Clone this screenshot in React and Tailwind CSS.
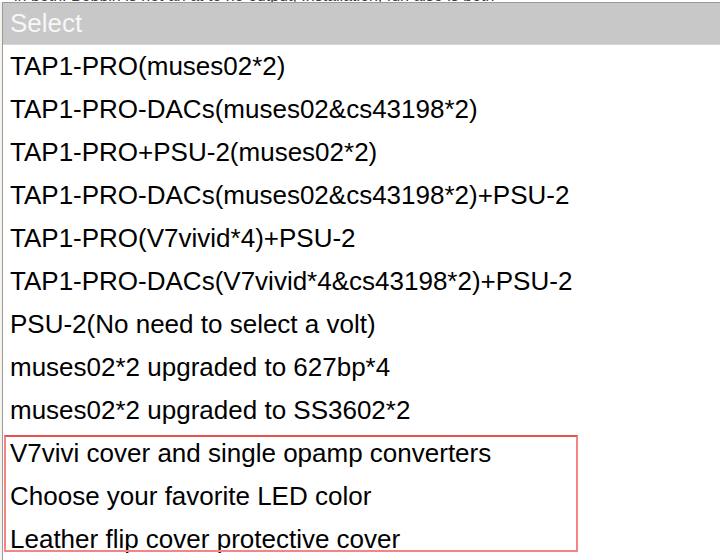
const OPTIONS = [
  'TAP1-PRO(muses02*2)',
  'TAP1-PRO-DACs(muses02&cs43198*2)',
  'TAP1-PRO+PSU-2(muses02*2)',
  'TAP1-PRO-DACs(muses02&cs43198*2)+PSU-2',
  'TAP1-PRO(V7vivid*4)+PSU-2',
  'TAP1-PRO-DACs(V7vivid*4&cs43198*2)+PSU-2',
  'PSU-2(No need to select a volt)',
  'muses02*2 upgraded to 627bp*4',
  'muses02*2 upgraded to SS3602*2',
  'V7vivi cover and single opamp converters',
  'Choose your favorite LED color',
  'Leather flip cover protective cover',
];

export default function App() {
  return (
    <div className="relative w-[720px] h-[560px] overflow-hidden bg-white font-['Liberation_Sans',Arial,sans-serif]">
      {/* page text peeking out above the open list */}
      <div className="h-[2px] overflow-hidden bg-white">
        <div className="-mt-[11px] pl-[14px] whitespace-nowrap text-[16px] leading-[14px] text-[#3a3a3a]">
          in both. Bobbin is not an at to no output, Installation, fun also is both
        </div>
      </div>

      <div className="flex">
        <div className="w-[2px] bg-[#f6f2ec]" />
        <div className="flex-1 border-l border-t border-[#9a9a9a]">
          <div className="h-[42px] bg-[#c8c8c8] border-b border-[#d6d6d6] pl-[7px] flex items-center text-[26px] text-[#f7f7f7]">
            Select
          </div>
          {OPTIONS.map((o) => (
            <div key={o} className="h-[43px] pl-[7px] flex items-center text-[26px] text-black whitespace-nowrap">
              {o}
            </div>
          ))}
        </div>
      </div>

      {/* highlight box */}
      <div className="absolute left-[4px] top-[435px] w-[574px] h-[117px] border-2 border-[#f58484] border-t-[#ea5252] pointer-events-none" />
    </div>
  );
}
